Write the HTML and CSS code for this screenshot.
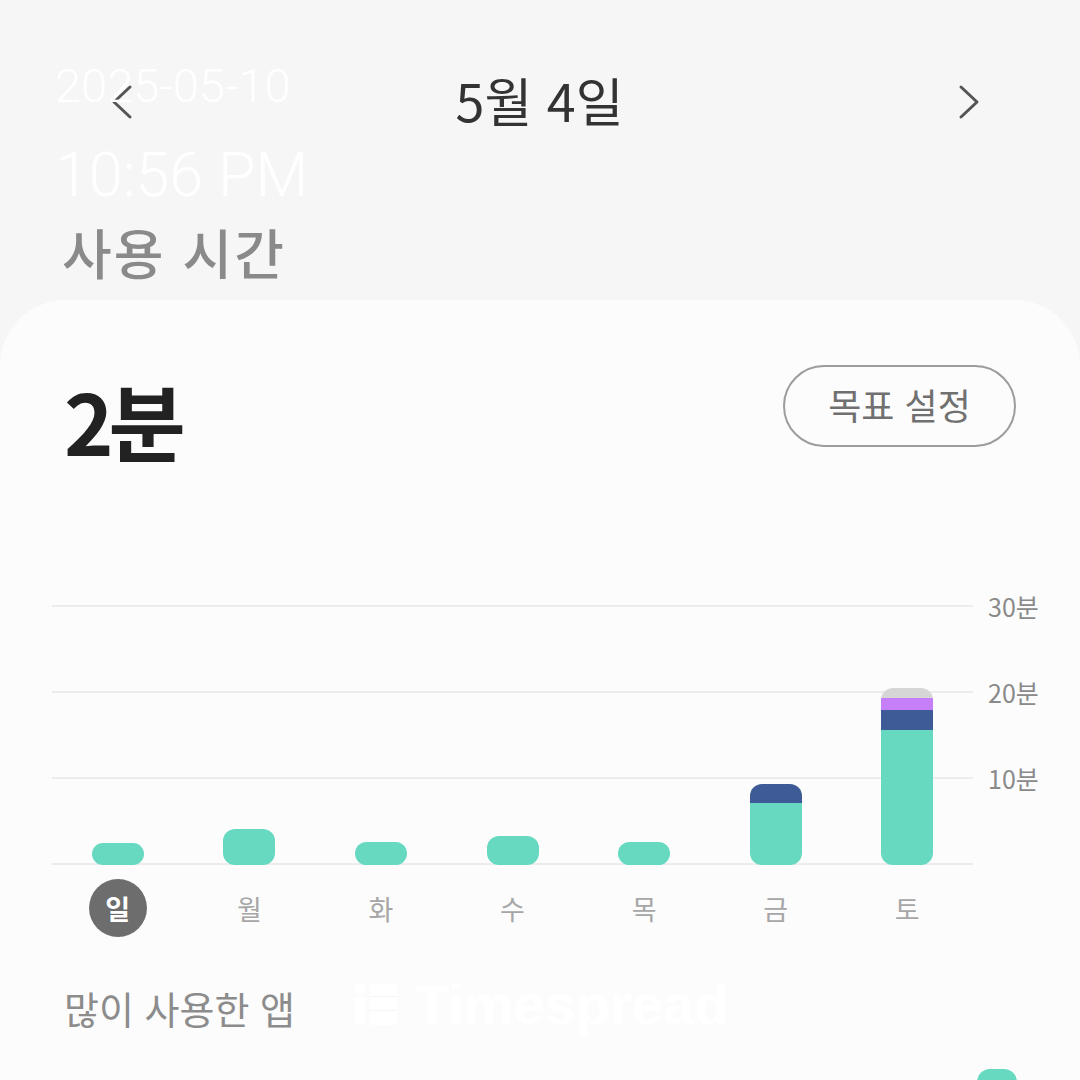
FILE: index.html
```html
<!DOCTYPE html>
<html lang="ko">
<head>
<meta charset="utf-8">
<title>사용 시간</title>
<link rel="stylesheet" href="styles.css">
</head>
<body>
<div class="screen">
  <header class="top">
    <div class="stamp">
      <div class="stamp-date">2025-05-10</div>
      <div class="stamp-time">10:56 PM</div>
    </div>
    <nav class="nav">
      <svg class="chev" width="40" height="40" viewBox="0 0 40 40"><polyline points="28,5 12,20 28,35" fill="none" stroke="#555" stroke-width="3" stroke-linecap="round" stroke-linejoin="round"/></svg>
      <div class="nav-title">5월 4일</div>
      <svg class="chev" width="40" height="40" viewBox="0 0 40 40"><polyline points="12,5 28,20 12,35" fill="none" stroke="#555" stroke-width="3" stroke-linecap="round" stroke-linejoin="round"/></svg>
    </nav>
    <h2 class="section-title">사용 시간</h2>
  </header>

  <main class="card">
    <div class="summary">
      <div class="total">2분</div>
      <button class="goal">목표 설정</button>
    </div>

    <div class="chart">
      <div class="chart-row">
        <div class="plot">
          <div class="gridlines">
            <div class="gl"></div><div class="gl"></div><div class="gl"></div><div class="gl"></div>
          </div>
          <div class="bars">
            <div class="col"><div class="bar"><div class="seg teal" style="height:22px"></div></div></div>
            <div class="col"><div class="bar"><div class="seg teal" style="height:36px"></div></div></div>
            <div class="col"><div class="bar"><div class="seg teal" style="height:23px"></div></div></div>
            <div class="col"><div class="bar"><div class="seg teal" style="height:29px"></div></div></div>
            <div class="col"><div class="bar"><div class="seg teal" style="height:23px"></div></div></div>
            <div class="col"><div class="bar"><div class="seg navy" style="height:19px"></div><div class="seg teal" style="height:62px"></div></div></div>
            <div class="col"><div class="bar"><div class="seg grey" style="height:10px"></div><div class="seg purple" style="height:12px"></div><div class="seg navy" style="height:20px"></div><div class="seg teal" style="height:135px"></div></div></div>
          </div>
        </div>
        <div class="axis">
          <div class="tick">30분</div>
          <div class="tick">20분</div>
          <div class="tick">10분</div>
        </div>
      </div>
      <div class="days">
        <div class="day"><span class="day-sel">일</span></div>
        <div class="day">월</div>
        <div class="day">화</div>
        <div class="day">수</div>
        <div class="day">목</div>
        <div class="day">금</div>
        <div class="day">토</div>
      </div>
    </div>

    <h3 class="apps-title">많이 사용한 앱</h3>
    <div class="app-row"><div class="app-bar"></div></div>

    <div class="watermark">
      <svg width="44" height="42" viewBox="0 0 44 42"><rect x="0" y="0" width="10" height="9" rx="3" fill="#fff"/><rect x="0" y="13" width="10" height="28" fill="#fff"/><rect x="15" y="0" width="27" height="41" fill="#fff"/><rect x="15" y="12" width="27" height="1" fill="#f6f6f6"/><rect x="15" y="26" width="27" height="1" fill="#f6f6f6"/></svg>
      <span class="wm-text">Timespread</span>
    </div>
  </main>
</div>
</body>
</html>
```

FILE: styles.css
```css
* { box-sizing: border-box; }
html, body { margin: 0; padding: 0; }
body {
  background: #f6f6f6;
  font-family: "Noto Sans CJK KR", "Noto Sans", sans-serif;
  width: 1080px;
  height: 1080px;
  overflow: hidden;
}
.screen { width: 1080px; }

.top {
  position: relative;
  padding-top: 60px;
  height: 300px;
}
.stamp {
  position: absolute;
  left: 55px;
  top: 57px;
  color: #ffffff;
  font-family: Roboto, "Liberation Sans", sans-serif;
  font-weight: 300;
  z-index: 2;
}
.stamp-date { font-size: 47px; line-height: 58px; }
.stamp-time { font-size: 61px; line-height: 70px; margin-top: 25px; }

.nav {
  display: flex;
  align-items: center;
  justify-content: space-between;
  height: 80px;
  padding: 0 91px 0 102px;
}
.chev { display: block; margin-top: 4px; }
.nav-title {
  font-size: 52px;
  line-height: 80px;
  font-weight: 400;
  color: #333333;
  letter-spacing: 0;
  margin-left: -12px;
}
.section-title {
  margin: 77px 0 0 62px;
  font-size: 54px;
  line-height: 70px;
  font-weight: 500;
  color: #8a8a8a;
  letter-spacing: 2px;
}

.card {
  position: relative;
  background: #fcfcfc;
  border-radius: 66px 66px 0 0;
  padding: 65px 64px 0 64px;
  height: 780px;
}
.summary {
  display: flex;
  justify-content: space-between;
  align-items: flex-start;
}
.total {
  font-size: 84px;
  line-height: 84px;
  font-weight: 700;
  color: #222222;
  letter-spacing: -5px;
  margin-top: 13px;
}
.goal {
  width: 233px;
  height: 82px;
  border: 2px solid #9c9c9c;
  border-radius: 41px;
  background: transparent;
  font-family: "Noto Sans CJK KR", sans-serif;
  font-size: 36px;
  color: #707070;
  letter-spacing: 0;
  padding: 0 0 4px 0;
}

.chart {
  margin: 143px 0 0 -12px;
  width: 1000px;
}
.chart-row { display: flex; }
.plot {
  width: 921px;
  height: 260px;
  display: grid;
}
.gridlines, .bars { grid-area: 1 / 1; }
.gridlines {
  display: flex;
  flex-direction: column;
  justify-content: space-between;
}
.gl { height: 2px; background: #ececec; }
.bars {
  display: flex;
  align-items: flex-end;
}
.col {
  flex: 1;
  display: flex;
  justify-content: center;
}
.bar {
  width: 52px;
  border-radius: 12px;
  overflow: hidden;
  display: flex;
  flex-direction: column;
}
.seg { width: 100%; }
.teal { background: #68d9c1; }
.navy { background: #3f5b97; }
.purple { background: #c67ff8; }
.grey { background: #d6d6d6; }

.axis {
  margin-left: 15px;
  margin-top: -13px;
  display: flex;
  flex-direction: column;
  gap: 58px;
}
.tick {
  height: 28px;
  line-height: 28px;
  font-size: 25px;
  color: #8a8a8a;
  letter-spacing: 0;
}

.days {
  display: flex;
  width: 921px;
  margin-top: 14px;
  height: 58px;
}
.day {
  flex: 1;
  display: flex;
  align-items: center;
  justify-content: center;
  font-size: 27px;
  color: #a6a6a6;
}
.day-sel {
  width: 58px;
  height: 58px;
  border-radius: 50%;
  background: #6d6d6d;
  color: #ffffff;
  font-weight: 700;
  display: flex;
  align-items: center;
  justify-content: center;
}

.apps-title {
  margin: 46px 0 0 0;
  font-size: 38px;
  line-height: 50px;
  font-weight: 400;
  color: #8c8c8c;
  letter-spacing: 0;
}
.app-row {
  display: flex;
  justify-content: flex-end;
  margin-top: 36px;
}
.app-bar {
  width: 40px;
  height: 30px;
  margin-right: -1px;
  border-radius: 13px 13px 0 0;
  background: #68d9c1;
}

.watermark {
  position: absolute;
  left: 355px;
  top: 680px;
  display: flex;
  align-items: center;
  gap: 16px;
}
.watermark svg { display: block; }
.wm-text {
  font-family: "Liberation Sans", Arial, sans-serif;
  font-weight: 700;
  font-size: 56px;
  line-height: 50px;
  color: #ffffff;
  letter-spacing: 0;
}
```
